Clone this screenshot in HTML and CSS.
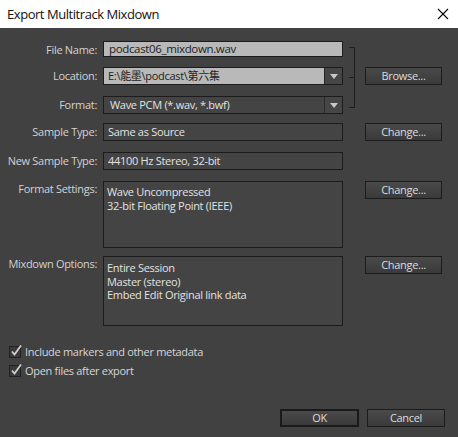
FILE: index.html
```html
<!DOCTYPE html>
<html>
<head>
<meta charset="utf-8">
<link rel="stylesheet" href="styles.css">
</head>
<body>
<div class="window">
  <div class="titlebar">
    <span class="title">Export Multitrack Mixdown</span>
    <svg class="close" width="12" height="12" viewBox="0 0 12 12"><path d="M1 1 L11 11 M11 1 L1 11" stroke="#000" stroke-width="1.1" fill="none"/></svg>
  </div>
  <div class="content">
    <div class="form">
      <div class="label r1">File Name:</div>
      <div class="field light fn r1">podcast06_mixdown.wav</div>
      <div class="bracket"></div>

      <div class="label r2">Location:</div>
      <div class="combo r2">
        <div class="value light">E:\能墨\podcast\第六集</div>
        <div class="arrow"><svg width="8" height="5" viewBox="0 0 8 5"><path d="M0 0 H8 L4 5 Z" fill="#c8c8c8"/></svg></div>
      </div>
      <div class="btn browse r2">Browse...</div>

      <div class="label r3">Format:</div>
      <div class="combo r3">
        <div class="value dark">Wave PCM (*.wav, *.bwf)</div>
        <div class="arrow"><svg width="8" height="5" viewBox="0 0 8 5"><path d="M0 0 H8 L4 5 Z" fill="#c8c8c8"/></svg></div>
      </div>

      <div class="label r4">Sample Type:</div>
      <div class="field dark r4">Same as Source</div>
      <div class="btn r4">Change...</div>

      <div class="label r5">New Sample Type:</div>
      <div class="field dark r5">44100 Hz Stereo, 32-bit</div>

      <div class="label top r6">Format Settings:</div>
      <div class="box fs r6">
        <div>Wave Uncompressed</div>
        <div>32-bit Floating Point (IEEE)</div>
      </div>
      <div class="btn r6">Change...</div>

      <div class="label top r7">Mixdown Options:</div>
      <div class="box mo r7">
        <div>Entire Session</div>
        <div>Master (stereo)</div>
        <div>Embed Edit Original link data</div>
      </div>
      <div class="btn r7">Change...</div>
    </div>

    <div class="checks">
      <div class="check">
        <span class="cb"><svg width="14" height="14" viewBox="0 0 14 14"><path d="M3 7.5 L5.5 10.5 L12 1.5" stroke="#cfcfcf" stroke-width="1.8" fill="none"/></svg></span>
        <span>Include markers and other metadata</span>
      </div>
      <div class="check">
        <span class="cb"><svg width="14" height="14" viewBox="0 0 14 14"><path d="M3 7.5 L5.5 10.5 L12 1.5" stroke="#cfcfcf" stroke-width="1.8" fill="none"/></svg></span>
        <span>Open files after export</span>
      </div>
    </div>

    <div class="actions">
      <div class="btn ok">OK</div>
      <div class="btn cancel">Cancel</div>
    </div>
  </div>
</div>
</body>
</html>
```
FILE: styles.css
```css
html, body {
  margin: 0;
  padding: 0;
  background: #414141;
}
.window {
  width: 458px;
  height: 437px;
  display: flex;
  flex-direction: column;
  font-family: "Open Sans", "Noto Sans CJK TC", sans-serif;
  font-size: 11px;
  letter-spacing: -0.3px;
  color: #d6d6d6;
}
.titlebar {
  height: 28px;
  background: #fff;
  display: flex;
  align-items: center;
  justify-content: space-between;
  padding: 0 8px 0 7px;
}
.title {
  font-size: 13px;
  letter-spacing: -0.45px;
  color: #111;
}
.close {
  margin-right: 1px;
}
.content {
  flex: 1;
  background: #414141;
  display: flex;
  flex-direction: column;
}
.form {
  margin-top: 13px;
  display: grid;
  grid-template-columns: 103px 240px 22px 77px;
  grid-template-rows: 26px 29px 27px 29px 29px 75px 70px;
  align-items: start;
}
.r1 { grid-row: 1; }
.r2 { grid-row: 2; }
.r3 { grid-row: 3; }
.r4 { grid-row: 4; }
.r5 { grid-row: 5; }
.r6 { grid-row: 6; }
.r7 { grid-row: 7; }
.label {
  grid-column: 1;
  text-align: right;
  padding-right: 6px;
  line-height: 17px;
  white-space: nowrap;
  color: #d2d2d2;
}
.label.top {
  line-height: 15px;
}
.field, .combo, .box {
  grid-column: 2;
  box-sizing: border-box;
  border: 1px solid #1c1c1c;
}
.field {
  height: 18px;
  line-height: 16px;
  padding-left: 4px;
  white-space: nowrap;
  overflow: hidden;
}
.field.fn {
  height: 16px;
  line-height: 14px;
  font-size: 11.5px;
  letter-spacing: -0.35px;
  padding-left: 5px;
}
.light {
  background: #b9b9b9;
  color: #1e1e1e;
}
.dark {
  background: #444;
  color: #e2e2e2;
}
.combo {
  height: 18px;
  display: flex;
}
.combo .value {
  flex: 1;
  line-height: 16px;
  padding-left: 4px;
  white-space: nowrap;
  overflow: hidden;
}
.r3 .value { padding-left: 6px; }
.combo .arrow {
  width: 17px;
  border-left: 1px solid #252525;
  background: #464646;
  display: flex;
  align-items: center;
  justify-content: center;
}
.r3.combo .arrow { border-left-color: #2a2a2a; }
.box {
  padding: 4px 0 0 3px;
  line-height: 13.5px;
  background: #444;
  color: #e2e2e2;
}
.box.fs { height: 67px; padding-top: 3px; }
.box.mo { height: 70px; }
.bracket {
  grid-column: 3;
  grid-row: 1 / 4;
  margin-top: 6px;
  margin-left: 6px;
  width: 5px;
  height: 59px;
  border: 1px solid #1e1e1e;
  border-left: none;
  background: linear-gradient(#1e1e1e, #1e1e1e) no-repeat 0 29px / 100% 1px;
}
.btn {
  box-sizing: border-box;
  height: 18px;
  line-height: 16px;
  text-align: center;
  border: 1px solid #1c1c1c;
  background: linear-gradient(#4a4a4a, #3a3a3a);
  color: #dcdcdc;
}
.form .btn {
  grid-column: 4;
}
.checks {
  margin-top: 19px;
  padding-left: 9px;
  display: flex;
  flex-direction: column;
  gap: 6px;
}
.check {
  display: flex;
  align-items: center;
  gap: 4px;
  height: 13px;
}
.cb {
  box-sizing: border-box;
  width: 12px;
  height: 12px;
  border: 1px solid #222;
  background: #3a3a3a;
  display: flex;
  overflow: visible;
}
.cb svg {
  margin: -3px 0 0 -1px;
  flex: none;
}
.actions {
  margin-top: 32px;
  display: flex;
  justify-content: flex-end;
  gap: 8px;
  padding-right: 13px;
}
.btn.ok {
  width: 79px;
  border: 2px solid #1a1a1a;
  line-height: 14px;
}
.btn.cancel {
  width: 78px;
}
```
